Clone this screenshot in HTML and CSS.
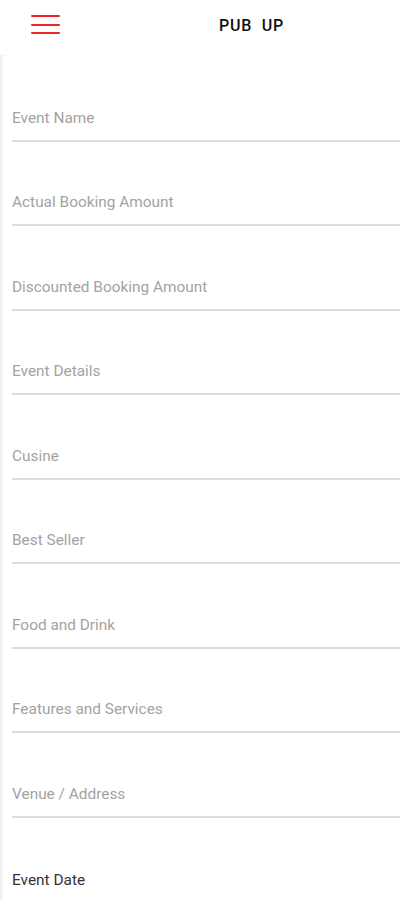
FILE: index.html
```html
<!DOCTYPE html>
<html lang="en">
<head>
    <meta charset="UTF-8">
    <meta name="viewport" content="width=device-width, initial-scale=1.0">
    <title>Pub Up - Add Event</title>
    <link rel="stylesheet" href="styles.css">
</head>
<body>
    <div class="header">
        <div class="menu">
            <span></span>
            <span></span>
            <span></span>
        </div>
        <h1 class="title">PUB&nbsp;&nbsp;UP</h1>
    </div>
    <div class="container">
        <form class="event-form">
            <label class="field"><input type="text" placeholder="Event Name"></label>
            <label class="field"><input type="text" placeholder="Actual Booking Amount"></label>
            <label class="field"><input type="text" placeholder="Discounted Booking Amount"></label>
            <label class="field"><input type="text" placeholder="Event Details"></label>
            <label class="field"><input type="text" placeholder="Cusine"></label>
            <label class="field"><input type="text" placeholder="Best Seller"></label>
            <label class="field"><input type="text" placeholder="Food and Drink"></label>
            <label class="field"><input type="text" placeholder="Features and Services"></label>
            <label class="field"><input type="text" placeholder="Venue / Address"></label>
            <div class="date-label">Event Date</div>
        </form>
    </div>
</body>
</html>
```

FILE: styles.css
```css
body {
    margin: 0;
    font-family: Roboto, "Liberation Sans", Arial, sans-serif;
    background: #ffffff;
    overflow: hidden;
}
.header {
    height: 55px;
    display: flex;
    align-items: center;
    position: relative;
    background: white;
}
.menu {
    margin-left: 31px;
    width: 29px;
    display: flex;
    flex-direction: column;
    gap: 6.5px;
    margin-top: -6px;
}
.menu span {
    display: block;
    height: 2px;
    background: #e8262b;
    border-radius: 1px;
}
.title {
    position: absolute;
    left: 219px;
    top: 16px;
    margin: 0;
    font-size: 16px;
    font-weight: 500;
    color: #111;
    letter-spacing: 0.8px;
}
.container {
    min-height: 845px;
    box-shadow: inset 3px 0 3px -1px rgba(0, 0, 0, 0.08);
    padding: 2px 11px 0 12px;
}
.event-form {
    display: flex;
    flex-direction: column;
}
.field {
    display: block;
    padding-top: 50.5px;
}
.field input {
    width: 100%;
    box-sizing: border-box;
    border: none;
    border-bottom: 2px solid #dcdcdc;
    padding: 0 0 13px 0;
    font-family: inherit;
    font-size: 15.4px;
    color: #333;
    background: transparent;
    outline: none;
}
.field input::placeholder {
    color: #a3a3a3;
}
.date-label {
    margin-top: 53px;
    font-size: 15.4px;
    color: #333;
}
```
